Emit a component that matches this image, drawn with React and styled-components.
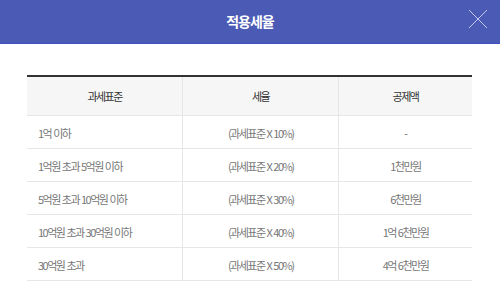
import React from "react";
import styled, { createGlobalStyle } from "styled-components";

const GlobalStyle = createGlobalStyle`
  html, body {
    margin: 0;
    padding: 0;
    background: #fff;
  }
  body {
    font-family: "Noto Sans CJK KR", "Noto Sans", sans-serif;
  }
`;

const Modal = styled.div`
  width: 500px;
  height: 306px;
  background: #fff;
  overflow: hidden;
`;

const Header = styled.header`
  position: relative;
  height: 43px;
  background: #4b5bb5;
  border-bottom: 1px solid #3e50c2;
  display: flex;
  align-items: center;
  justify-content: center;
`;

const Title = styled.h2`
  margin: 0;
  color: #fff;
  font-size: 14px;
  font-weight: 700;
  letter-spacing: -1px;
  line-height: 1;
  padding-bottom: 2px;
`;

const CloseButton = styled.button`
  position: absolute;
  top: 9px;
  right: 12px;
  width: 20px;
  height: 20px;
  padding: 0;
  border: 0;
  background: none;
  cursor: pointer;
  display: flex;
`;

const Body = styled.div`
  padding: 31px 28px 0 27px;
`;

const Table = styled.table`
  width: 100%;
  border-collapse: collapse;
  border-top: 2px solid #333;
  table-layout: fixed;
`;

const Th = styled.th`
  height: 38px;
  padding: 0;
  background: #f6f6f6;
  color: #333;
  font-size: 11px;
  font-weight: 400;
  line-height: 14px;
  letter-spacing: -1.5px;
  text-align: center;
  border-bottom: 1px solid #e6e6e6;
  border-left: 1px solid #e6e6e6;
  &:first-child {
    border-left: 0;
  }
`;

const Td = styled.td`
  height: 30px;
  padding: ${(p) => (p.$left ? "2px 0 0 11px" : "2px 0 0")};
  color: #777;
  font-size: 11px;
  line-height: 14px;
  letter-spacing: -1.5px;
  word-spacing: 1px;
  text-align: ${(p) => (p.$left ? "left" : "center")};
  border-bottom: 1px solid #e6e6e6;
  border-left: 1px solid #e6e6e6;
  &:first-child {
    border-left: 0;
  }
`;

const rows = [
  ["1억 이하", "(과세표준 X 10%)", "-"],
  ["1억원 초과 5억원 이하", "(과세표준 X 20%)", "1천만원"],
  ["5억원 초과 10억원 이하", "(과세표준 X 30%)", "6천만원"],
  ["10억원 초과 30억원 이하", "(과세표준 X 40%)", "1억 6천만원"],
  ["30억원 초과", "(과세표준 X 50%)", "4억 6천만원"],
];

export default function App() {
  return (
    <>
      <GlobalStyle />
      <Modal>
        <Header>
          <Title>적용세율</Title>
          <CloseButton aria-label="닫기">
            <svg width="20" height="20" viewBox="0 0 20 20">
              <path d="M1 1 L19 19 M19 1 L1 19" stroke="#c5cbf0" strokeWidth="1" />
            </svg>
          </CloseButton>
        </Header>
        <Body>
          <Table>
            <colgroup>
              <col style={{ width: "35%" }} />
              <col style={{ width: "35%" }} />
              <col style={{ width: "30%" }} />
            </colgroup>
            <thead>
              <tr>
                <Th>과세표준</Th>
                <Th>세율</Th>
                <Th>공제액</Th>
              </tr>
            </thead>
            <tbody>
              {rows.map((r) => (
                <tr key={r[0]}>
                  <Td $left>{r[0]}</Td>
                  <Td>{r[1]}</Td>
                  <Td>{r[2]}</Td>
                </tr>
              ))}
            </tbody>
          </Table>
        </Body>
      </Modal>
    </>
  );
}
